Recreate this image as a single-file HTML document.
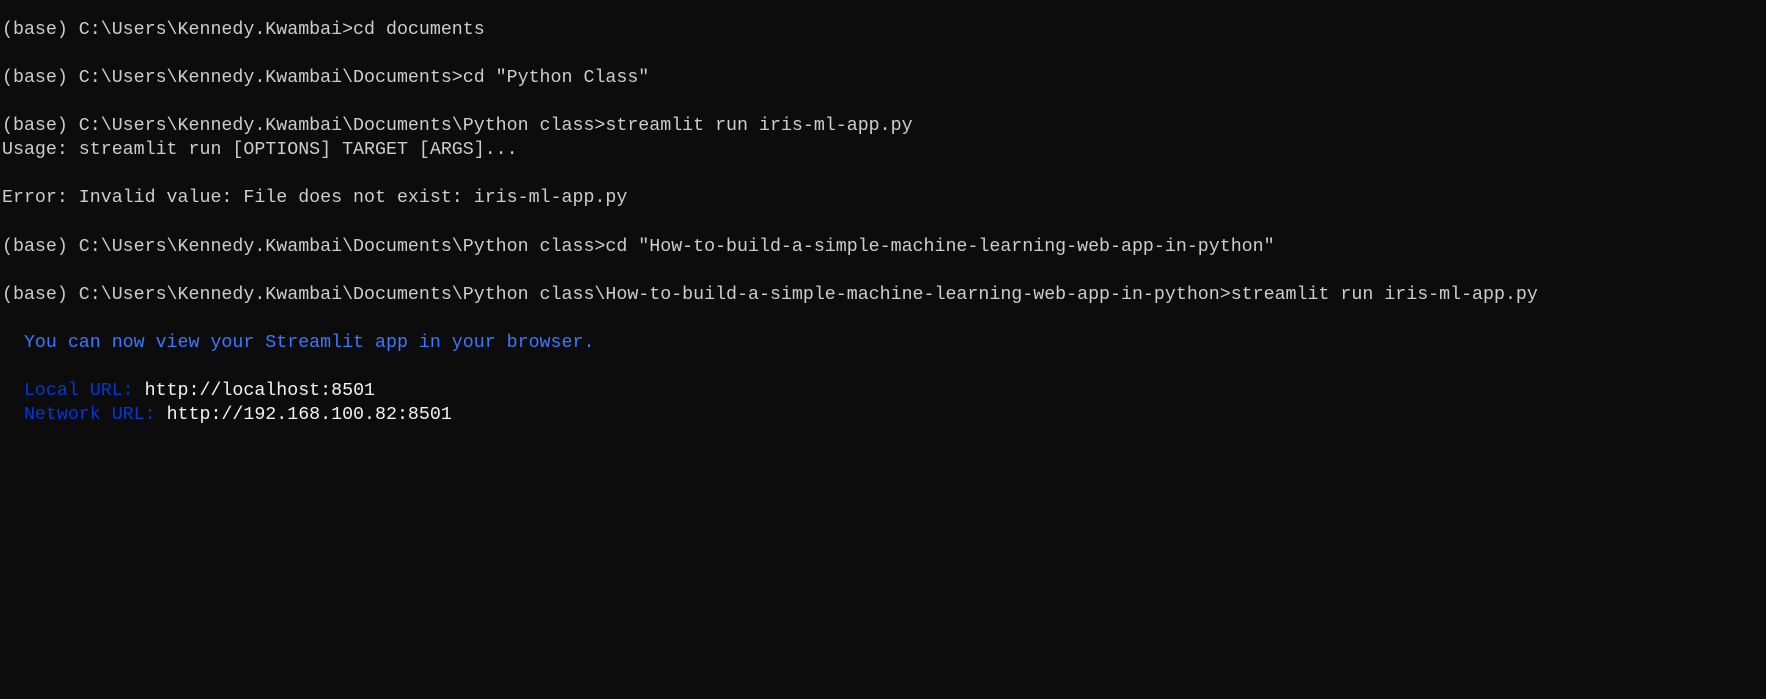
<!DOCTYPE html>
<html><head><meta charset="utf-8"><style>
html,body{margin:0;padding:0;background:#0c0c0c;width:1766px;height:699px;overflow:hidden}
pre{margin:0;padding:18px 0 0 2px;font-family:"Liberation Mono",monospace;font-size:18.3px;line-height:24.07px;color:#cccccc}
.b{color:#3b78ff}.d{color:#0037da}.w{color:#f2f2f2}
</style></head><body><pre>(base) C:\Users\Kennedy.Kwambai&gt;cd documents

(base) C:\Users\Kennedy.Kwambai\Documents&gt;cd "Python Class"

(base) C:\Users\Kennedy.Kwambai\Documents\Python class&gt;streamlit run iris-ml-app.py
Usage: streamlit run [OPTIONS] TARGET [ARGS]...

Error: Invalid value: File does not exist: iris-ml-app.py

(base) C:\Users\Kennedy.Kwambai\Documents\Python class&gt;cd "How-to-build-a-simple-machine-learning-web-app-in-python"

(base) C:\Users\Kennedy.Kwambai\Documents\Python class\How-to-build-a-simple-machine-learning-web-app-in-python&gt;streamlit run iris-ml-app.py

<span class="b">  You can now view your Streamlit app in your browser.</span>

<span class="d">  Local URL: </span><span class="w">http://localhost:8501</span>
<span class="d">  Network URL: </span><span class="w">http://192.168.100.82:8501</span>
</pre></body></html>
